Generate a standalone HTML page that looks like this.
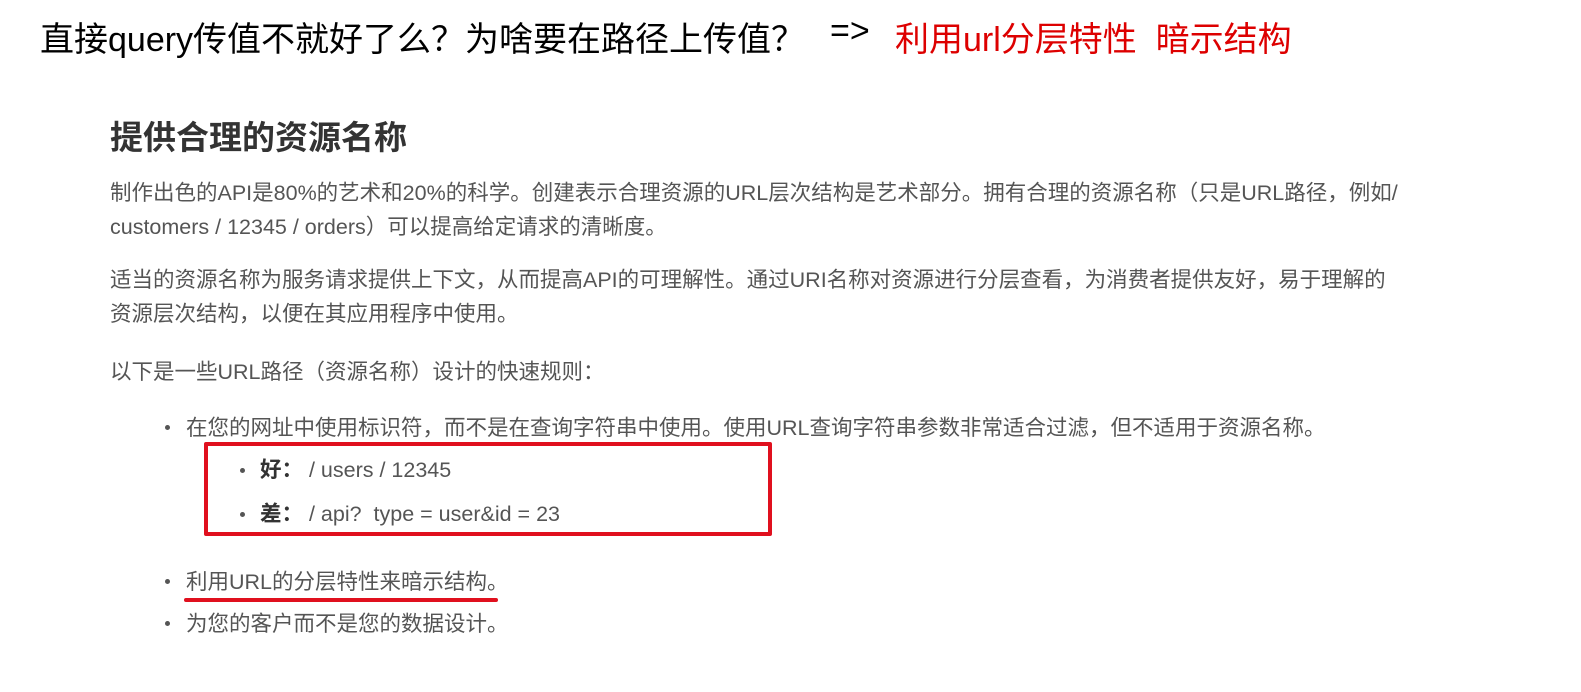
<!DOCTYPE html>
<html><head><meta charset="utf-8"><style>
body{margin:0;width:1581px;height:692px;background:#fff;position:relative;overflow:hidden;font-family:"Liberation Sans","Noto Sans CJK SC",sans-serif}
.a{position:absolute;white-space:nowrap}
.t{font-size:34px;color:#000;top:12px}
.p{font-size:21.5px;color:#555;left:110px;letter-spacing:0}
.b{position:absolute;width:5px;height:5px;border-radius:50%;background:#555}
</style></head><body>
<div class="a t" style="left:40px">直接query传值不就好了么？为啥要在路径上传值？</div>
<div class="a t" style="left:830px">=&gt;</div>
<div class="a t" style="left:895px;color:#d00">利用url分层特性&nbsp;&nbsp;暗示结构</div>
<div class="a" style="left:110px;top:111px;font-size:33px;font-weight:bold;color:#333">提供合理的资源名称</div>
<div class="a p" style="top:176px">制作出色的API是80%的艺术和20%的科学。创建表示合理资源的URL层次结构是艺术部分。拥有合理的资源名称（只是URL路径，例如/</div>
<div class="a p" style="top:210px">customers / 12345 / orders）可以提高给定请求的清晰度。</div>
<div class="a p" style="top:263px">适当的资源名称为服务请求提供上下文，从而提高API的可理解性。通过URI名称对资源进行分层查看，为消费者提供友好，易于理解的</div>
<div class="a p" style="top:297px">资源层次结构，以便在其应用程序中使用。</div>
<div class="a p" style="top:355px">以下是一些URL路径（资源名称）设计的快速规则：</div>
<div class="b" style="left:165px;top:425px"></div>
<div class="a p" style="left:186px;top:411px">在您的网址中使用标识符，而不是在查询字符串中使用。使用URL查询字符串参数非常适合过滤，但不适用于资源名称。</div>
<div style="position:absolute;left:204px;top:442px;width:560px;height:86px;border:4px solid #e0101e;border-radius:2px"></div>
<div class="b" style="left:240px;top:468px"></div>
<div class="a p" style="left:260px;top:453px"><b style="color:#333">好：</b> / users / 12345</div>
<div class="b" style="left:240px;top:512px"></div>
<div class="a p" style="left:260px;top:497px"><b style="color:#333">差：</b> / api?&nbsp; type = user&amp;id = 23</div>
<div class="b" style="left:165px;top:579px"></div>
<div class="a p" style="left:186px;top:565px">利用URL的分层特性来暗示结构。</div>
<div style="position:absolute;left:184px;top:598px;width:314px;height:4px;background:#e0101e;border-radius:2px"></div>
<div class="b" style="left:165px;top:621px"></div>
<div class="a p" style="left:186px;top:607px">为您的客户而不是您的数据设计。</div>
</body></html>
